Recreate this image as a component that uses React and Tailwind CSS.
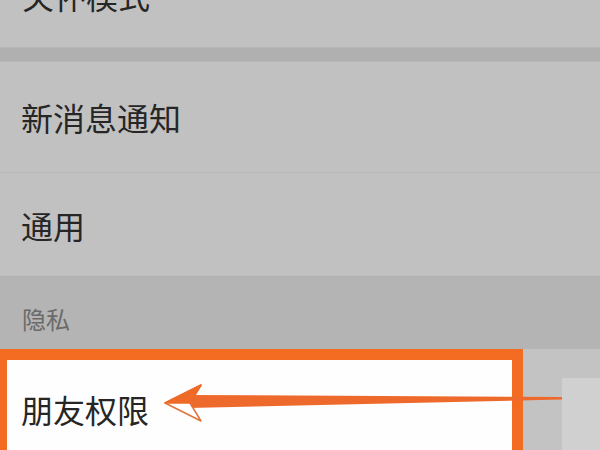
export default function App() {
  const font = { fontFamily: '"Noto Sans CJK SC", "Noto Sans", sans-serif' }

  return (
    <div className="relative w-[600px] h-[450px] overflow-hidden bg-[#c1c1c1]" style={font}>
      <div className="flex flex-col">
        {/* top row, cut off */}
        <div className="-mt-[57px] h-[104px] flex items-center px-[22px] bg-[#c1c1c1]">
          <span className="text-[32px] text-[#262626]">关怀模式</span>
        </div>

        <div className="h-[15px] bg-[#b0b0b0] border-y border-[#b6b6b6]" />

        <div className="h-[110px] flex items-center px-[21px] bg-[#c1c1c1]">
          <span className="text-[32px] text-[#262626]">新消息通知</span>
        </div>
        <div className="h-px bg-[#b8b8b8]" />
        <div className="h-[103px] flex items-center px-[21px] bg-[#c1c1c1]">
          <span className="text-[32px] text-[#262626]">通用</span>
        </div>

        <div className="h-[73px] flex items-end pb-[12px] px-[22px] bg-[#b4b4b4] border-t border-[#b0b0b0]">
          <span className="text-[24px] text-[#6a6a6a]">隐私</span>
        </div>

        <div className="flex h-[110px] bg-[#c3c3c3]">
          <div className="w-[523px] border-t-[11px] border-l-[7px] border-r-[11px] border-[#f36c21] bg-[#fefefe] flex items-start pt-[25px] px-[14px]">
            <span className="text-[32px] text-[#262626]">朋友权限</span>
          </div>
          <div className="flex-1 flex justify-end pt-[29px]">
            <div className="w-[38px] bg-[#d0d0d0]" />
          </div>
        </div>
      </div>

      {/* annotation arrow */}
      <svg className="absolute inset-0 pointer-events-none" width="600" height="450" viewBox="0 0 600 450">
        <polygon points="188,395 562,397 562,399.5 188,408" fill="#ee6a2c" />
        <polygon points="165,403 201,385 190,403 201,421" fill="#ffffff" stroke="#e0733a" strokeWidth="1.5" strokeLinejoin="round" />
        <polygon points="165,403 201,385 190,403" fill="#ef6a28" stroke="#ef6a28" strokeWidth="1.5" strokeLinejoin="round" />
      </svg>
    </div>
  )
}
